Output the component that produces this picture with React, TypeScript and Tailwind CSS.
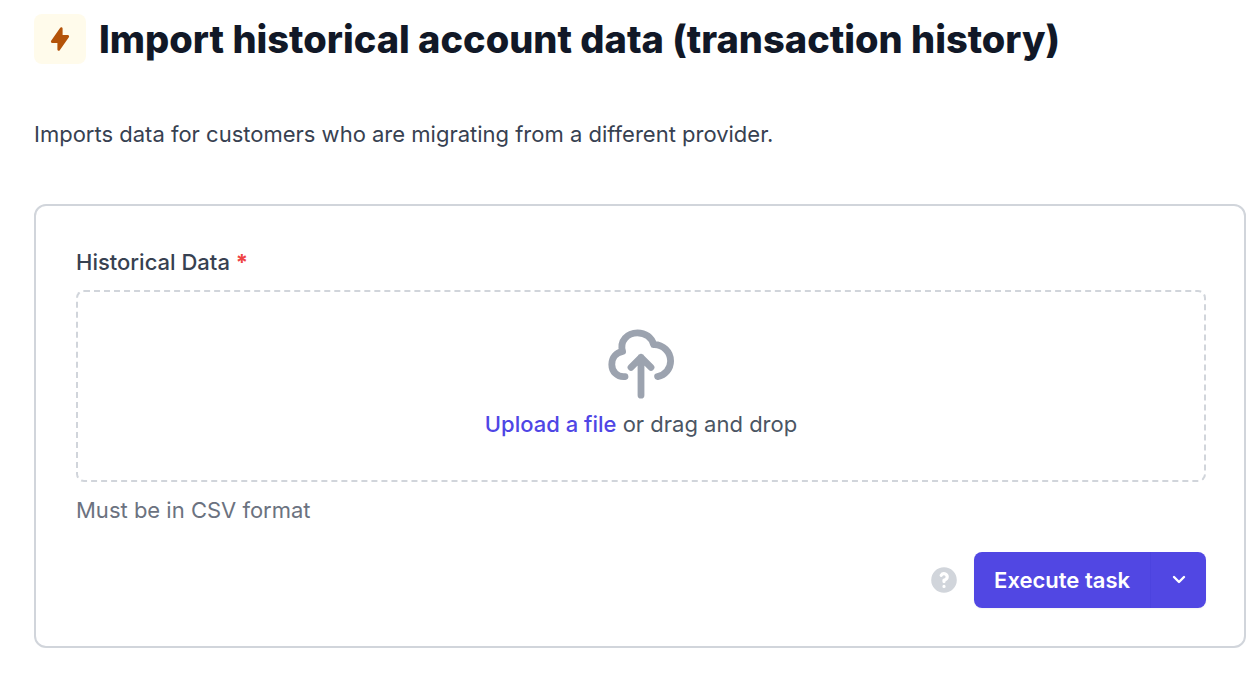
import { HiLightningBolt, HiQuestionMarkCircle } from "react-icons/hi";

function UploadIcon() {
  return (
    <svg
      className="h-[84px] w-20 text-[#9ca3af]"
      viewBox="0 0 80 84"
      fill="none"
      stroke="currentColor"
      strokeWidth="6.8"
      strokeLinecap="round"
      strokeLinejoin="round"
      aria-hidden="true"
    >
      <path d="M24 52.6C16 53.4 10.8 47.4 10.8 40.4C10.8 33.4 15.4 28.6 21.6 27.4C18.4 17 26.4 8.8 36.5 8.8C44.5 8.8 50.8 13.6 52.6 20.6C62 20.2 69.6 27.8 69.6 37C69.6 45 64 51 56.6 52.6" />
      <path d="M50 43.4L40 33.4L30 43.4M40 33.4V71.2" />
    </svg>
  );
}

export default function App() {
  return (
    <main className="min-h-screen bg-white pt-[14px] pr-3 pb-8 pl-[34px] font-['Inter',sans-serif] text-[22px] leading-8">
      <header className="flex items-center gap-[13px]">
        <span className="grid h-[50px] w-[52px] shrink-0 place-items-center rounded-lg bg-[#fffbeb] text-[#b45309]">
          <HiLightningBolt className="size-[26px]" />
        </span>
        <h1 className="text-[38px] leading-[48px] font-extrabold text-[#111827]">
          Import historical account data (transaction history)
        </h1>
      </header>

      <p className="mt-[54px] text-[#374151]">
        Imports data for customers who are migrating from a different provider.
      </p>

      <form className="mt-[54px] rounded-xl border-2 border-[#d1d5db] pt-10 pr-[38px] pb-[38px] pl-10">
        <label htmlFor="historical-data" className="block font-medium text-[#374151]">
          Historical Data <span className="font-bold text-[#ef4444]">*</span>
        </label>
        <div className="mt-3 flex flex-col items-center rounded-lg border-2 border-dashed border-[#d1d5db] pt-8 pb-10">
          <UploadIcon />
          <p className="text-[#4b5563]">
            <label htmlFor="historical-data" className="cursor-pointer font-medium text-[#4f46e5]">
              Upload a file
            </label>{" "}
            or drag and drop
          </p>
          <input id="historical-data" type="file" accept=".csv" required className="sr-only" />
        </div>
        <p className="mt-3 text-[#6b7280]">Must be in CSV format</p>

        <div className="mt-[26px] flex items-center justify-end gap-[14px]">
          <button type="button" aria-label="Help" className="text-[#d1d5db]">
            <HiQuestionMarkCircle className="size-8" />
          </button>
          <div className="flex h-14 overflow-hidden rounded-lg bg-[#5147e3] text-white shadow-xs">
            <button type="submit" className="px-5 font-semibold">
              Execute task
            </button>
            <button
              type="button"
              aria-label="More options"
              className="grid w-14 place-items-center border-l border-[#4c43df]"
            >
              <svg
                className="size-5"
                viewBox="0 0 20 20"
                fill="none"
                stroke="currentColor"
                strokeWidth="2.4"
                strokeLinecap="round"
                strokeLinejoin="round"
                aria-hidden="true"
              >
                <path d="M5 7l5 5 5-5" />
              </svg>
            </button>
          </div>
        </div>
      </form>
    </main>
  );
}
